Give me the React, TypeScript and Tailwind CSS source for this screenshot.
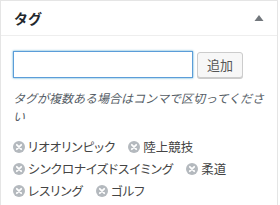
import React from 'react';

const tags = ['リオオリンピック', '陸上競技', 'シンクロナイズドスイミング', '柔道', 'レスリング', 'ゴルフ'];

function RemoveIcon() {
    return (
        <svg width="12" height="12" viewBox="0 0 12 12" className="shrink-0">
            <circle cx="6" cy="6" r="6" fill="#b4b9be" />
            <path d="M3.8 3.8 L8.2 8.2 M8.2 3.8 L3.8 8.2" stroke="#fff" strokeWidth="1.8" strokeLinecap="round" />
        </svg>
    );
}

export default function App() {
    return (
        <div className="w-[280px] h-[205px] bg-white font-['Noto_Sans_CJK_JP','Liberation_Sans',sans-serif]">
            <div className="w-[278px] h-[205px] border border-b-0 border-[#e5e5e5] bg-white">
                {/* header */}
                <div className="h-[35px] flex items-center justify-between pl-[13px] pr-[13px] border-b border-[#eeeeee]">
                    <h2 className="text-[14px] font-bold text-[#23282d] leading-none">タグ</h2>
                    <svg width="10" height="8" viewBox="0 0 10 8">
                        <path d="M5 1 L9.5 7 L0.5 7 Z" fill="#72777c" />
                    </svg>
                </div>

                <div className="px-[12px] pt-[15px]">
                    <div className="flex items-center gap-[4px]">
                        <input
                            type="text"
                            className="w-[180px] h-[27px] border border-[#5b9dd9] bg-white outline-none shadow-[0_0_2px_rgba(30,140,190,0.8)]"
                        />
                        <button className="h-[26px] px-[9px] text-[13px] text-[#555] bg-[#f7f7f7] border border-[#cccccc] rounded-[3px] shadow-[0_1px_0_#cccccc] leading-none">
                            追加
                        </button>
                    </div>

                    <p className="mt-[11px] text-[12px] leading-[18px] italic text-[#555d66]">
                        タグが複数ある場合はコンマで区切ってください
                    </p>

                    <ul className="mt-[11px] flex flex-wrap gap-x-[13px] text-[12.5px] leading-[22px] text-[#444] [font-feature-settings:'palt']">
                        {tags.map(tag => (
                            <li key={tag} className="flex items-center gap-[3px]">
                                <RemoveIcon />
                                <span>{tag}</span>
                            </li>
                        ))}
                    </ul>
                </div>
            </div>
        </div>
    );
}
